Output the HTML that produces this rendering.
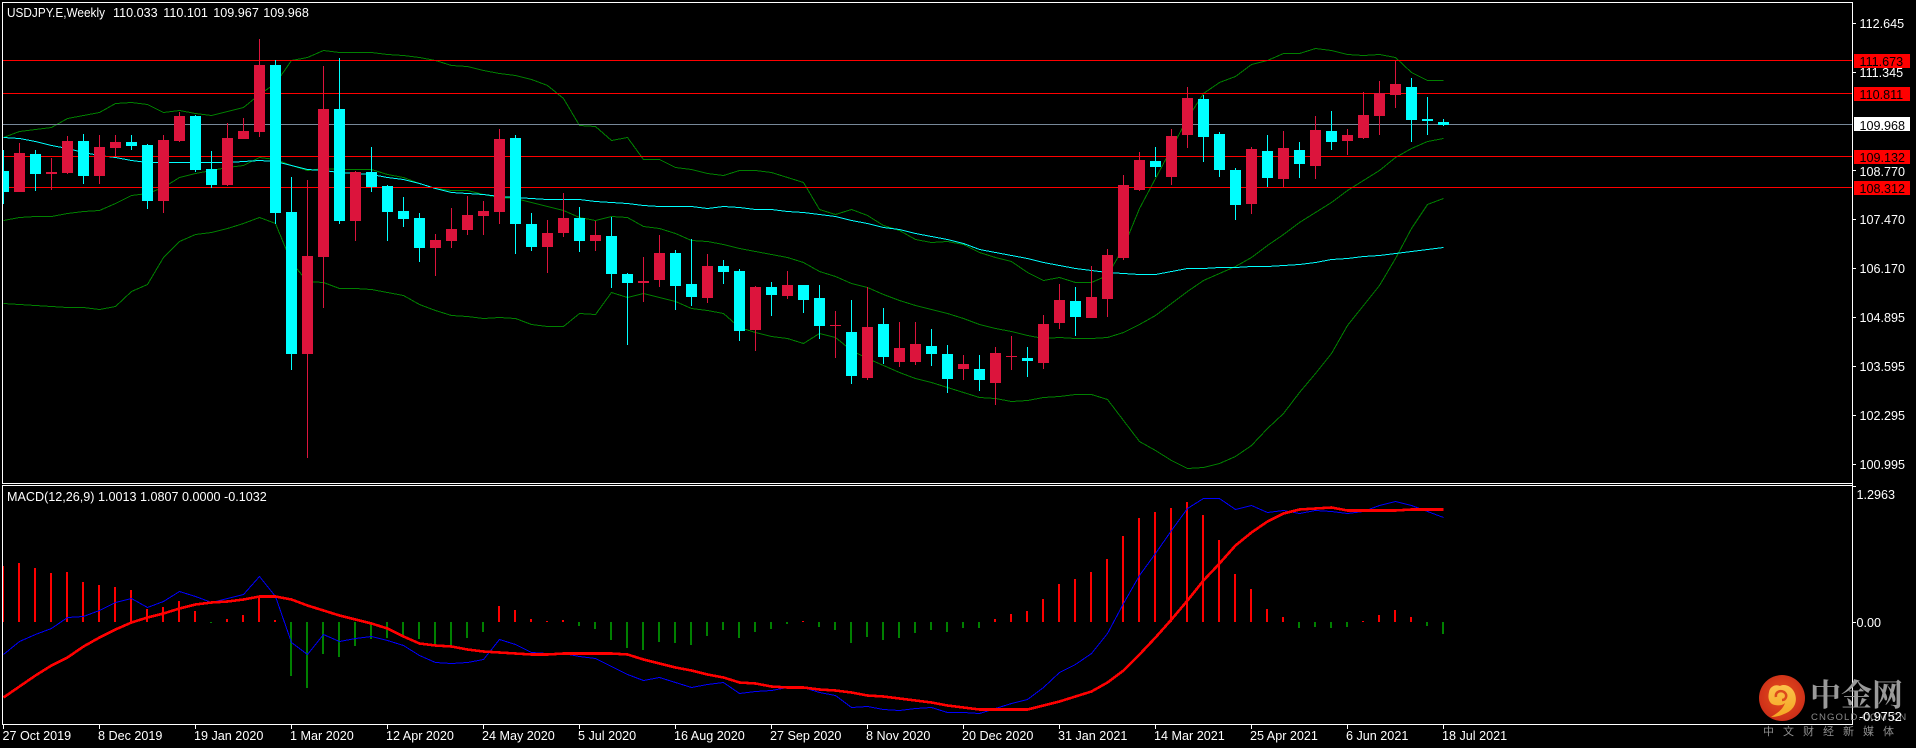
<!DOCTYPE html>
<html><head><meta charset="utf-8"><title>USDJPY.E,Weekly</title>
<style>
html,body{margin:0;padding:0;background:#000;width:1916px;height:748px;overflow:hidden}
svg{display:block}
text{font-family:"Liberation Sans",sans-serif;font-size:12.6px;fill:#fff;white-space:pre}
.k{fill:#000}
</style></head><body>
<svg width="1916" height="748" viewBox="0 0 1916 748" xmlns="http://www.w3.org/2000/svg">
<defs>
<clipPath id="m"><rect x="3" y="3" width="1849" height="480"/></clipPath>
<clipPath id="d"><rect x="3" y="486" width="1849" height="238"/></clipPath>
<radialGradient id="lg" cx="0.5" cy="0.45" r="0.6"><stop offset="0" stop-color="#e8501c"/><stop offset="1" stop-color="#c92a18"/></radialGradient>
<linearGradient id="ly" x1="0" y1="0" x2="0" y2="1"><stop offset="0" stop-color="#fbc24a"/><stop offset="1" stop-color="#f5a623"/></linearGradient>
</defs>
<rect width="1916" height="748" fill="#000"/>

<g clip-path="url(#m)">
<g transform="translate(.5 .5)" fill="none" stroke-width="1" shape-rendering="crispEdges">
<polyline stroke="#008000" points="3,137 19,131 35,129 51,127 67,118 83,115 99,112 115,103 131,102 147,104 163,112 179,110 195,113 211,115 227,111 243,107 259,94 275,83 291,60 307,57 323,50 339,52 355,52 371,52 387,54 403,55 419,57 435,60 451,65 467,66 483,70 499,73 515,75 531,79 547,85 563,98 579,125 595,126 611,140 627,137 643,159 659,159 675,167 691,169 707,173 723,175 739,170 755,170 771,172 787,177 803,182 819,209 835,214 851,209 867,215 883,225 899,230 915,239 931,242 947,241 963,244 979,252 995,257 1011,261 1027,272 1043,280 1059,277 1075,282 1091,282 1107,275 1123,247 1139,208 1155,178 1171,148 1187,118 1203,93 1219,82 1235,76 1251,64 1267,60 1283,53 1299,53 1315,48 1331,50 1347,54 1363,55 1379,54 1395,57 1411,72 1427,80 1443,80"/>
<polyline stroke="#008000" points="3,220 19,217 35,216 51,216 67,213 83,211 99,210 115,203 131,195 147,193 163,187 179,177 195,173 211,170 227,167 243,165 259,157 275,159 291,165 307,170 323,168 339,169 355,169 371,169 387,174 403,177 419,183 435,188 451,190 467,190 483,194 499,197 515,198 531,202 547,206 563,210 579,217 595,220 611,216 627,217 643,226 659,228 675,233 691,240 707,241 723,244 739,248 755,251 771,254 787,257 803,262 819,271 835,276 851,283 867,287 883,294 899,300 915,305 931,309 947,313 963,318 979,324 995,328 1011,331 1027,335 1043,338 1059,337 1075,338 1091,338 1107,337 1123,332 1139,324 1155,315 1171,303 1187,291 1203,280 1219,273 1235,266 1251,257 1267,245 1283,234 1299,222 1315,212 1331,202 1347,190 1363,180 1379,170 1395,157 1411,148 1427,141 1443,138"/>
<polyline stroke="#008000" points="3,303 19,304 35,305 51,306 67,307 83,307 99,309 115,306 131,291 147,284 163,257 179,241 195,234 211,232 227,228 243,223 259,217 275,223 291,262 307,281 323,282 339,288 355,288 371,289 387,292 403,295 419,304 435,310 451,315 467,316 483,318 499,317 515,318 531,324 547,326 563,326 579,313 595,314 611,292 627,297 643,293 659,297 675,301 691,308 707,310 723,313 739,327 755,332 771,336 787,338 803,343 819,333 835,337 851,350 867,358 883,365 899,372 915,378 931,382 947,387 963,392 979,397 995,398 1011,401 1027,400 1043,397 1059,396 1075,394 1091,394 1107,399 1123,420 1139,441 1155,450 1171,460 1187,468 1203,467 1219,463 1235,456 1251,445 1267,428 1283,413 1299,392 1315,373 1331,353 1347,325 1363,305 1379,285 1395,258 1411,228 1427,204 1443,198"/>
<polyline stroke="#00ffff" points="3,137 19,138 35,141 51,145 67,148 83,152 99,155 115,157 131,160 147,162 163,162 179,162 195,162 211,162 227,162 243,161 259,160 275,161 291,165 307,169 323,170 339,172 355,173 371,174 387,177 403,179 419,183 435,188 451,192 467,193 483,194 499,196 515,197 531,198 547,199 563,199 579,199 595,201 611,202 627,203 643,205 659,206 675,206 691,206 707,208 723,206 739,207 755,209 771,209 787,211 803,212 819,214 835,216 851,220 867,223 883,227 899,229 915,233 931,236 947,239 963,243 979,249 995,252 1011,255 1027,258 1043,262 1059,265 1075,268 1091,270 1107,272 1123,273 1139,274 1155,274 1171,271 1187,268 1203,268 1219,267 1235,267 1251,266 1267,266 1283,265 1299,264 1315,262 1331,259 1347,258 1363,256 1379,255 1395,253 1411,251 1427,249 1443,247"/>
</g>
<g shape-rendering="crispEdges">
<rect x="3" y="60" width="1849" height="1" fill="#f00"/>
<rect x="3" y="93" width="1849" height="1" fill="#f00"/>
<rect x="3" y="124" width="1849" height="1" fill="#778899"/>
<rect x="3" y="156" width="1849" height="1" fill="#f00"/>
<rect x="3" y="187" width="1849" height="1" fill="#f00"/>
<path fill="#00ffff" d="M-2 171h11V192h-11zM3 150h1V204h-1zM30 154h11V174h-11zM35 150h1V191h-1zM78 141h11V176h-11zM83 134h1V184h-1zM126 142h11V146h-11zM131 135h1V150h-1zM142 145h11V201h-11zM147 144h1V209h-1zM190 116h11V170h-11zM195 115h1V172h-1zM206 169h11V185h-11zM211 151h1V188h-1zM270 65h11V213h-11zM275 60h1V224h-1zM286 212h11V354h-11zM291 177h1V370h-1zM334 109h11V221h-11zM339 58h1V224h-1zM366 172h11V187h-11zM371 147h1V192h-1zM382 186h11V212h-11zM387 185h1V241h-1zM398 211h11V219h-11zM403 197h1V227h-1zM414 218h11V248h-11zM419 213h1V262h-1zM510 138h11V224h-11zM515 135h1V254h-1zM526 224h11V247h-11zM531 213h1V251h-1zM574 218h11V241h-11zM579 207h1V252h-1zM606 236h11V274h-11zM611 217h1V288h-1zM622 274h11V283h-11zM627 273h1V345h-1zM670 253h11V286h-11zM675 250h1V310h-1zM686 284h11V297h-11zM691 239h1V306h-1zM718 266h11V272h-11zM723 260h1V284h-1zM734 271h11V331h-11zM739 269h1V341h-1zM766 287h11V295h-11zM771 282h1V316h-1zM798 285h11V300h-11zM803 285h1V313h-1zM814 298h11V326h-11zM819 285h1V339h-1zM846 332h11V376h-11zM851 300h1V384h-1zM878 324h11V357h-11zM883 308h1V364h-1zM926 346h11V354h-11zM931 329h1V366h-1zM942 354h11V379h-11zM947 345h1V393h-1zM974 369h11V380h-11zM979 355h1V391h-1zM1022 358h11V361h-11zM1027 347h1V377h-1zM1070 301h11V317h-11zM1075 287h1V336h-1zM1150 161h11V167h-11zM1155 147h1V177h-1zM1198 99h11V137h-11zM1203 95h1V162h-1zM1214 134h11V170h-11zM1219 132h1V177h-1zM1230 170h11V205h-11zM1235 168h1V220h-1zM1262 151h11V178h-11zM1267 135h1V187h-1zM1294 150h11V164h-11zM1299 142h1V178h-1zM1326 131h11V142h-11zM1331 111h1V150h-1zM1406 87h11V120h-11zM1411 78h1V142h-1zM1422 119h11V121h-11zM1427 97h1V135h-1zM1438 122h11V125h-11zM1443 119h1V126h-1z"/>
<path fill="#dc143c" d="M14 153h11V192h-11zM19 143h1V192h-1zM46 172h11V174h-11zM51 158h1V190h-1zM62 141h11V173h-11zM67 136h1V174h-1zM94 147h11V176h-11zM99 135h1V184h-1zM110 142h11V148h-11zM115 135h1V156h-1zM158 140h11V201h-11zM163 135h1V213h-1zM174 116h11V141h-11zM179 112h1V142h-1zM222 138h11V185h-11zM227 123h1V186h-1zM238 131h11V139h-11zM243 118h1V139h-1zM254 65h11V132h-11zM259 39h1V137h-1zM302 256h11V354h-11zM307 180h1V458h-1zM318 109h11V257h-11zM323 66h1V308h-1zM350 172h11V221h-11zM355 171h1V241h-1zM430 240h11V248h-11zM435 234h1V276h-1zM446 229h11V241h-11zM451 208h1V248h-1zM462 215h11V230h-11zM467 196h1V235h-1zM478 211h11V216h-11zM483 201h1V235h-1zM494 139h11V212h-11zM499 129h1V224h-1zM542 233h11V247h-11zM547 220h1V273h-1zM558 218h11V233h-11zM563 193h1V237h-1zM590 235h11V241h-11zM595 221h1V251h-1zM638 281h11V283h-11zM643 257h1V302h-1zM654 253h11V280h-11zM659 235h1V287h-1zM702 266h11V298h-11zM707 254h1V303h-1zM750 287h11V330h-11zM755 286h1V351h-1zM782 285h11V296h-11zM787 271h1V299h-1zM830 325h11V326h-11zM835 311h1V358h-1zM862 327h11V378h-11zM867 287h1V380h-1zM894 348h11V362h-11zM899 322h1V367h-1zM910 344h11V362h-11zM915 322h1V365h-1zM958 364h11V369h-11zM963 355h1V380h-1zM990 353h11V383h-11zM995 347h1V405h-1zM1006 356h11V357h-11zM1011 336h1V370h-1zM1038 324h11V363h-11zM1043 315h1V369h-1zM1054 300h11V323h-11zM1059 284h1V329h-1zM1086 297h11V318h-11zM1091 266h1V318h-1zM1102 255h11V299h-11zM1107 249h1V317h-1zM1118 185h11V258h-11zM1123 175h1V260h-1zM1134 160h11V190h-11zM1139 152h1V191h-1zM1166 136h11V177h-11zM1171 129h1V185h-1zM1182 98h11V135h-11zM1187 87h1V148h-1zM1246 149h11V204h-11zM1251 147h1V214h-1zM1278 148h11V179h-11zM1283 131h1V187h-1zM1310 130h11V166h-11zM1315 116h1V179h-1zM1342 135h11V141h-11zM1347 129h1V155h-1zM1358 115h11V138h-11zM1363 92h1V139h-1zM1374 93h11V116h-11zM1379 81h1V135h-1zM1390 84h11V95h-11zM1395 61h1V108h-1z"/>
</g>
</g>

<g clip-path="url(#d)">
<g shape-rendering="crispEdges">
<path fill="#f00" d="M2 566h2V622h-2zM18 563h2V622h-2zM34 568h2V622h-2zM50 573h2V622h-2zM66 572h2V622h-2zM82 582h2V622h-2zM98 585h2V622h-2zM114 587h2V622h-2zM130 590h2V622h-2zM146 609h2V622h-2zM162 607h2V622h-2zM178 601h2V622h-2zM194 611h2V622h-2zM226 619h2V622h-2zM242 615h2V622h-2zM258 597h2V622h-2zM274 620h2V622h-2zM498 606h2V622h-2zM514 610h2V622h-2zM530 619h2V622h-2zM546 621h2V622h-2zM562 620h2V622h-2zM802 621h2V622h-2zM994 619h2V622h-2zM1010 614h2V622h-2zM1026 611h2V622h-2zM1042 599h2V622h-2zM1058 584h2V622h-2zM1074 579h2V622h-2zM1090 572h2V622h-2zM1106 559h2V622h-2zM1122 536h2V622h-2zM1138 518h2V622h-2zM1154 512h2V622h-2zM1170 508h2V622h-2zM1186 502h2V622h-2zM1202 515h2V622h-2zM1218 540h2V622h-2zM1234 574h2V622h-2zM1250 589h2V622h-2zM1266 609h2V622h-2zM1282 617h2V622h-2zM1362 621h2V622h-2zM1378 615h2V622h-2zM1394 610h2V622h-2zM1410 617h2V622h-2z"/>
<path fill="#008000" d="M210 622h2V623h-2zM290 622h2V676h-2zM306 622h2V688h-2zM322 622h2V654h-2zM338 622h2V657h-2zM354 622h2V646h-2zM370 622h2V639h-2zM386 622h2V638h-2zM402 622h2V636h-2zM418 622h2V639h-2zM434 622h2V645h-2zM450 622h2V646h-2zM466 622h2V638h-2zM482 622h2V632h-2zM578 622h2V626h-2zM594 622h2V629h-2zM610 622h2V640h-2zM626 622h2V648h-2zM642 622h2V650h-2zM658 622h2V642h-2zM674 622h2V643h-2zM690 622h2V645h-2zM706 622h2V636h-2zM722 622h2V630h-2zM738 622h2V638h-2zM754 622h2V632h-2zM770 622h2V629h-2zM786 622h2V624h-2zM818 622h2V627h-2zM834 622h2V630h-2zM850 622h2V643h-2zM866 622h2V637h-2zM882 622h2V640h-2zM898 622h2V638h-2zM914 622h2V633h-2zM930 622h2V630h-2zM946 622h2V632h-2zM962 622h2V628h-2zM978 622h2V628h-2zM1298 622h2V628h-2zM1314 622h2V627h-2zM1330 622h2V628h-2zM1346 622h2V627h-2zM1426 622h2V626h-2zM1442 622h2V634h-2z"/>
</g>
<g transform="translate(.5 .5)" fill="none" shape-rendering="crispEdges">
<polyline stroke="#0000ff" stroke-width="1" points="3,654 19,641 35,634 51,628 67,617 83,616 99,610 115,602 131,598 147,607 163,601 179,591 195,596 211,602 227,598 243,594 259,576 275,596 291,642 307,654 323,634 339,641 355,638 371,636 387,640 403,645 419,655 435,662 451,663 467,662 483,659 499,639 515,644 531,652 547,653 563,653 579,656 595,658 611,666 627,674 643,680 659,677 675,682 691,687 707,684 723,682 739,693 755,691 771,690 787,687 803,687 819,692 835,695 851,707 867,706 883,709 899,710 915,708 931,707 947,712 963,712 979,713 995,708 1011,703 1027,699 1043,687 1059,672 1075,664 1091,653 1107,633 1123,603 1139,575 1155,553 1171,530 1187,508 1203,498 1219,498 1235,509 1251,505 1267,512 1283,510 1299,513 1315,510 1331,511 1347,513 1363,511 1379,505 1395,501 1411,505 1427,511 1443,517"/>
<polyline stroke="#ff0000" stroke-width="2.6" points="3,697 19,686 35,675 51,665 67,657 83,646 99,637 115,629 131,622 147,617 163,613 179,608 195,604 211,602 227,601 243,599 259,596 275,596 291,599 307,605 323,610 339,615 355,619 371,623 387,628 403,636 419,643 435,645 451,646 467,649 483,651 499,652 515,653 531,654 547,654 563,653 579,653 595,653 611,653 627,654 643,659 659,663 675,667 691,670 707,674 723,677 739,682 755,683 771,686 787,687 803,687 819,689 835,690 851,692 867,695 883,696 899,698 915,700 931,702 947,705 963,707 979,709 995,709 1011,709 1027,709 1043,705 1059,701 1075,696 1091,691 1107,682 1123,670 1139,654 1155,637 1171,619 1187,600 1203,580 1219,563 1235,545 1251,532 1267,521 1283,513 1299,509 1315,508 1331,507 1347,510 1363,510 1379,510 1395,510 1411,509 1427,509 1443,509"/>
</g>
</g>

<g shape-rendering="crispEdges" fill="#fff">
<rect x="2" y="2" width="1851" height="1"/>
<rect x="2" y="2" width="1" height="482"/>
<rect x="2" y="483" width="1851" height="1"/>
<rect x="1852" y="2" width="1" height="723"/>
<rect x="2" y="485" width="1851" height="1"/>
<rect x="2" y="485" width="1" height="240"/>
<rect x="2" y="724" width="1851" height="1"/>
<path d="M1853 23h3v1h-3zM1853 72h3v1h-3zM1853 170h3v1h-3zM1853 219h3v1h-3zM1853 268h3v1h-3zM1853 317h3v1h-3zM1853 366h3v1h-3zM1853 415h3v1h-3zM1853 464h3v1h-3zM1853 486h3v1h-3zM1853 622h3v1h-3z"/>
<path d="M3 725h1v4h-1zM99 725h1v4h-1zM195 725h1v4h-1zM291 725h1v4h-1zM387 725h1v4h-1zM483 725h1v4h-1zM579 725h1v4h-1zM675 725h1v4h-1zM771 725h1v4h-1zM867 725h1v4h-1zM963 725h1v4h-1zM1059 725h1v4h-1zM1155 725h1v4h-1zM1251 725h1v4h-1zM1347 725h1v4h-1zM1443 725h1v4h-1z"/>
<rect x="1854" y="54" width="56" height="14" fill="#f00"/>
<rect x="1854" y="87" width="56" height="14" fill="#f00"/>
<rect x="1854" y="117" width="56" height="14" fill="#fff"/>
<rect x="1854" y="150" width="56" height="14" fill="#f00"/>
<rect x="1854" y="181" width="56" height="14" fill="#f00"/>
</g>

<text x="7" y="17" textLength="98" lengthAdjust="spacingAndGlyphs">USDJPY.E,Weekly</text>
<text x="113" y="17">110.033</text><text x="163.3" y="17">110.101</text><text x="213.3" y="17">109.967</text><text x="263.3" y="17">109.968</text>
<text x="7" y="501">MACD(12,26,9) 1.0013 1.0807 0.0000 -0.1032</text>

<text x="1859.5" y="28">112.645</text>
<text x="1859.5" y="77">111.345</text>
<text x="1859.5" y="176">108.770</text>
<text x="1859.5" y="224">107.470</text>
<text x="1859.5" y="273">106.170</text>
<text x="1859.5" y="322">104.895</text>
<text x="1859.5" y="371">103.595</text>
<text x="1859.5" y="420">102.295</text>
<text x="1859.5" y="469">100.995</text>
<text x="1859.5" y="66" class="k">111.673</text>
<text x="1859.5" y="99" class="k">110.811</text>
<text x="1859.5" y="130" class="k">109.968</text>
<text x="1859.5" y="162" class="k">109.132</text>
<text x="1859.5" y="193" class="k">108.312</text>

<text x="1856.5" y="499">1.2963</text>
<text x="1856.5" y="627">0.00</text>

<text x="2.5" y="740">27 Oct 2019</text>
<text x="98" y="740">8 Dec 2019</text>
<text x="194" y="740">19 Jan 2020</text>
<text x="290" y="740">1 Mar 2020</text>
<text x="386" y="740">12 Apr 2020</text>
<text x="482" y="740">24 May 2020</text>
<text x="578" y="740">5 Jul 2020</text>
<text x="674" y="740">16 Aug 2020</text>
<text x="770" y="740">27 Sep 2020</text>
<text x="866" y="740">8 Nov 2020</text>
<text x="962" y="740">20 Dec 2020</text>
<text x="1058" y="740">31 Jan 2021</text>
<text x="1154" y="740">14 Mar 2021</text>
<text x="1250" y="740">25 Apr 2021</text>
<text x="1346" y="740">6 Jun 2021</text>
<text x="1442" y="740">18 Jul 2021</text>

<circle cx="1782" cy="698" r="23" fill="url(#lg)"/>
<path fill="url(#ly)" d="M1769 692C1770 686 1776 684 1780 686C1785 683 1793 687 1795 694C1798 703 1793 711 1784 714C1780 716 1775 717 1771 717C1778 713 1783 709 1785 703C1782 706 1776 706 1772 704C1768 701 1768 696 1769 692Z"/>
<path fill="none" stroke="#dd4a1c" stroke-width="2.5" d="M1776 697C1775 692 1780 690 1784 692C1788 695 1786 700 1782 700"/>
<text x="1810" y="706" style="font-family:'Noto Serif CJK SC','Noto Sans CJK SC',serif;font-size:31px;font-weight:700;fill:#9a9a9a">中金网</text>
<text x="1811" y="720" style="font-size:9.6px;letter-spacing:1.05px;fill:#8a8a8a">CNGOLD.COM.CN</text>
<text x="1763" y="735" style="font-family:'Noto Sans CJK SC',sans-serif;font-size:11px;letter-spacing:9px;fill:#8f8f8f">中文财经新媒体</text>
<text x="1859" y="721">-0.9752</text>
</svg>
</body></html>
